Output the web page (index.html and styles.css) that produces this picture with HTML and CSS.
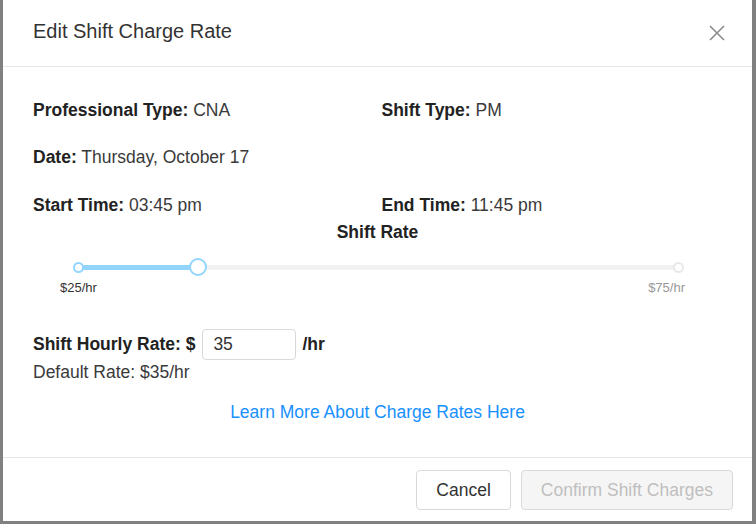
FILE: index.html
```html
<!DOCTYPE html>
<html>
<head>
<meta charset="utf-8">
<link rel="stylesheet" href="styles.css">
</head>
<body>
<div class="modal">
  <div class="modal-header">
    <div class="modal-title">Edit Shift Charge Rate</div>
    <button class="close" aria-label="Close">
      <svg width="16" height="16" viewBox="0 0 16 16"><path d="M1 1L15 15M15 1L1 15" stroke="#8c8c8c" stroke-width="1.6" fill="none"/></svg>
    </button>
  </div>
  <div class="modal-body">
    <div class="info-row r1">
      <div class="info-cell"><b>Professional Type:</b> CNA</div>
      <div class="info-cell"><b>Shift Type:</b> PM</div>
    </div>
    <div class="info-row r2">
      <div class="info-cell"><b>Date:</b> Thursday, October 17</div>
    </div>
    <div class="info-row r3">
      <div class="info-cell"><b>Start Time:</b> 03:45 pm</div>
      <div class="info-cell"><b>End Time:</b> 11:45 pm</div>
    </div>
    <div class="rate-title">Shift Rate</div>
    <div class="slider">
      <div class="rail">
        <div class="track" style="width:20%"></div>
        <span class="dot dot-start"></span>
        <span class="dot dot-end"></span>
        <span class="handle" style="left:20%"></span>
      </div>
      <div class="marks">
        <span class="mark active">$25/hr</span>
        <span class="mark">$75/hr</span>
      </div>
    </div>
    <div class="hourly">
      <b>Shift Hourly Rate: $</b>
      <input class="rate-input" type="text" value="35">
      <b>/hr</b>
    </div>
    <div class="default-rate">Default Rate: $35/hr</div>
    <div class="learn"><a href="#">Learn More About Charge Rates Here</a></div>
  </div>
  <div class="modal-footer">
    <button class="btn">Cancel</button>
    <button class="btn btn-disabled">Confirm Shift Charges</button>
  </div>
</div>
</body>
</html>
```

FILE: styles.css
```css
html, body {
  margin: 0;
  padding: 0;
}
body {
  background: #808080;
  width: 756px;
  height: 524px;
  overflow: hidden;
  font-family: "Liberation Sans", Arial, sans-serif;
  color: #3a3a3a;
}
.modal {
  margin-left: 3px;
  width: 749px;
  height: 521px;
  background: #fff;
  display: flex;
  flex-direction: column;
}
.modal-header {
  height: 66px;
  border-bottom: 1px solid #e8e8e8;
  display: flex;
  align-items: center;
  justify-content: space-between;
  padding: 0 27px 0 30px;
  box-sizing: content-box;
}
.modal-title {
  font-size: 20px;
  color: #333;
  margin-top: -4px;
}
.close {
  border: 0;
  background: none;
  padding: 0;
  width: 16px;
  height: 16px;
  display: flex;
}
.modal-body {
  padding: 30px 30px 31px;
  font-size: 17.5px;
  flex: 1;
}
.modal-body b {
  color: #222;
}
.info-row {
  display: flex;
  height: 26px;
  line-height: 26px;
}
.r1 { margin-bottom: 21px; }
.r2 { margin-bottom: 22px; }
.info-cell {
  width: 350px;
}
.info-cell + .info-cell {
  margin-left: 8px;
}
.rate-title {
  text-align: center;
  font-weight: bold;
  color: #222;
  line-height: 26px;
  margin-top: 1px;
}
.slider {
  margin: 0 44px 0 45px;
  padding-top: 20px;
}
.rail {
  position: relative;
  height: 5px;
  background: #f2f2f2;
  border-radius: 3px;
}
.track {
  height: 5px;
  background: #91d5ff;
  border-radius: 3px;
}
.dot {
  position: absolute;
  top: -3px;
  width: 7px;
  height: 7px;
  border-radius: 50%;
  background: #fff;
  border: 2px solid #91d5ff;
  margin-left: -5.5px;
}
.dot-start { left: 0; }
.dot-end { left: 100%; border-color: #e8e8e8; }
.handle {
  position: absolute;
  top: -7px;
  width: 14px;
  height: 14px;
  margin-left: -9.5px;
  border-radius: 50%;
  background: #fff;
  border: 2.5px solid #91d5ff;
}
.marks {
  display: flex;
  justify-content: space-between;
  margin: 10px -7px 0 -18px;
  font-size: 13px;
  line-height: 16px;
  color: #999;
}
.mark.active {
  color: #333;
}
.hourly {
  margin-top: 33px;
  display: flex;
  align-items: center;
  height: 31px;
}
.hourly b {
  line-height: 31px;
}
.rate-input {
  width: 94px;
  height: 31px;
  box-sizing: border-box;
  margin: 0 6px 0 7px;
  border: 1px solid #d9d9d9;
  border-radius: 4px;
  padding: 0 10px;
  font-family: "Liberation Sans", Arial, sans-serif;
  font-size: 17.5px;
  color: #333;
  outline: none;
}
.default-rate {
  margin-top: 1px;
  line-height: 22px;
}
.learn {
  margin-top: 16px;
  text-align: center;
  line-height: 26px;
}
.learn a {
  color: #1890ff;
  text-decoration: none;
}
.modal-footer {
  border-top: 1px solid #e8e8e8;
  padding: 12px 19px 11px 20px;
  display: flex;
  justify-content: flex-end;
  gap: 10px;
}
.btn {
  height: 40px;
  padding: 0 19px;
  border: 1px solid #d9d9d9;
  border-radius: 4px;
  background: #fff;
  font-family: "Liberation Sans", Arial, sans-serif;
  font-size: 17.5px;
  color: #333;
}
.btn-disabled {
  background: #f5f5f5;
  color: #bfbfbf;
}
```
